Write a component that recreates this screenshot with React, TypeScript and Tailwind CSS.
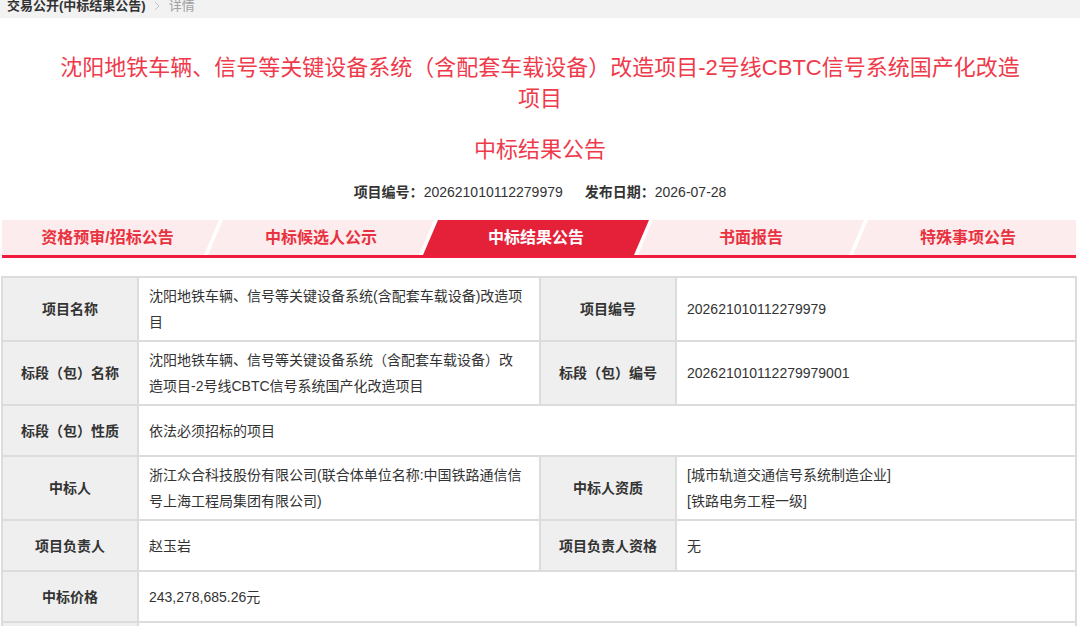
import React from "react";

type Tab = { label: string; active?: boolean; cls: string };

const tabs: Tab[] = [
  {
    label: "资格预审/招标公告",
    cls: "w-[217px] pr-[6px] [clip-path:polygon(0_0,100%_0,calc(100%_-_15px)_100%,0_100%)]",
  },
  {
    label: "中标候选人公示",
    cls: "w-[226px] -ml-[11px] [clip-path:polygon(15px_0,100%_0,calc(100%_-_15px)_100%,0_100%)]",
  },
  {
    label: "中标结果公告",
    active: true,
    cls: "w-[226px] -ml-[11px] [clip-path:polygon(15px_0,100%_0,calc(100%_-_15px)_100%,0_100%)]",
  },
  {
    label: "书面报告",
    cls: "w-[226px] -ml-[11px] [clip-path:polygon(15px_0,100%_0,calc(100%_-_15px)_100%,0_100%)]",
  },
  {
    label: "特殊事项公告",
    cls: "w-[223px] -ml-[11px] pl-[7px] [clip-path:polygon(15px_0,100%_0,100%_100%,0_100%)]",
  },
];

const labelCls =
  "flex min-h-[49px] items-center justify-center bg-[#efefef] px-[4px] py-[5px] text-center font-bold text-[#333]";
const valueCls =
  "flex min-h-[49px] items-center bg-white pl-[10px] pr-[14px] py-[5px] text-[#333]";
const valueWide =
  "col-span-3 flex min-h-[49px] items-center bg-white pl-[10px] pr-[14px] py-[5px] text-[#333]";

export default function App() {
  return (
    <div className="h-[626px] w-[1080px] overflow-hidden bg-white font-['Liberation_Sans','Noto_Sans_CJK_SC',sans-serif] text-[#333]">
      {/* breadcrumb */}
      <div className="h-[18px] overflow-hidden bg-[#f2f2f2]">
        <div className="-mt-[1px] flex items-center pl-[7px] text-[13px] leading-[14px]">
          <span className="font-bold text-[#333]">交易公开(中标结果公告)</span>
          <svg
            className="ml-[8px] mr-[9px]"
            width="6"
            height="10"
            viewBox="0 0 6 10"
            fill="none"
          >
            <path d="M1 1l4 4-4 4" stroke="#c4c4c4" strokeWidth="1" />
          </svg>
          <span className="text-[#a0a0a0]">详情</span>
        </div>
      </div>

      {/* title */}
      <h1 className="mx-auto mt-[34px] w-[970px] text-center text-[22px] font-normal leading-[31px] text-[#ef3a4b]">
        沈阳地铁车辆、信号等关键设备系统（含配套车载设备）改造项目-2号线CBTC信号系统国产化改造项目
      </h1>
      <h2 className="mt-[20px] text-center text-[22px] font-normal leading-[31px] text-[#ef3a4b]">
        中标结果公告
      </h2>

      {/* meta */}
      <div className="mt-[17px] flex justify-center gap-[22px] text-[14px] leading-[20px] text-[#333]">
        <span>
          <span className="font-bold">项目编号：</span>202621010112279979
        </span>
        <span>
          <span className="font-bold">发布日期：</span>2026-07-28
        </span>
      </div>

      {/* tabs */}
      <div className="ml-[2px] mt-[18px] w-[1074px]">
        <div className="flex h-[35px]">
          {tabs.map((t) => (
            <div
              key={t.label}
              className={
                "flex h-[35px] shrink-0 items-center justify-center text-[16px] font-bold " +
                (t.active ? "bg-[#e5213a] text-white " : "bg-[#fdeced] text-[#e8323f] ") +
                t.cls
              }
            >
              {t.label}
            </div>
          ))}
        </div>
        <div className="h-[3px] bg-[#f01b3d]" />
      </div>

      {/* table */}
      <div className="ml-[1px] mt-[18px] grid w-[1076px] grid-cols-[134px_400px_134px_398px] gap-[2px] border-2 border-[#dcdcdc] bg-[#dcdcdc] text-[14px] leading-[26px]">
        <div className={labelCls}>项目名称</div>
        <div className={valueCls}>
          <span>沈阳地铁车辆、信号等关键设备系统(含配套车载设备)改造项目</span>
        </div>
        <div className={labelCls}>项目编号</div>
        <div className={valueCls}>202621010112279979</div>

        <div className={labelCls}>标段（包）名称</div>
        <div className={valueCls}>
          <span>沈阳地铁车辆、信号等关键设备系统（含配套车载设备）改造项目-2号线CBTC信号系统国产化改造项目</span>
        </div>
        <div className={labelCls}>标段（包）编号</div>
        <div className={valueCls}>202621010112279979001</div>

        <div className={labelCls}>标段（包）性质</div>
        <div className={valueWide}>依法必须招标的项目</div>

        <div className={labelCls}>中标人</div>
        <div className={valueCls}>
          <span>浙江众合科技股份有限公司(联合体单位名称:中国铁路通信信号上海工程局集团有限公司)</span>
        </div>
        <div className={labelCls}>中标人资质</div>
        <div className={valueCls}>
          <div className="flex flex-col">
            <span>[城市轨道交通信号系统制造企业]</span>
            <span>[铁路电务工程一级]</span>
          </div>
        </div>

        <div className={labelCls}>项目负责人</div>
        <div className={valueCls}>赵玉岩</div>
        <div className={labelCls}>项目负责人资格</div>
        <div className={valueCls}>无</div>

        <div className={labelCls}>中标价格</div>
        <div className={valueWide}>243,278,685.26元</div>

        <div className={labelCls} />
        <div className={valueWide} />
      </div>
    </div>
  );
}
